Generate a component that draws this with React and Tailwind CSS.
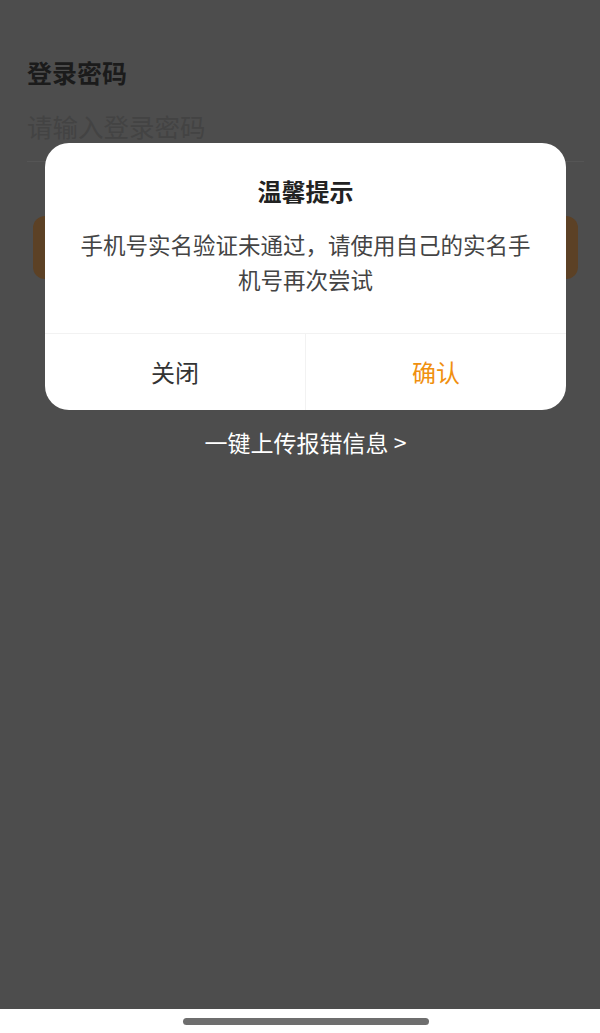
export default function App() {
  return (
    <div
      className="w-[600px] h-[1033px] flex flex-col bg-white"
      style={{ fontFamily: '"Noto Sans CJK SC", "Noto Sans", sans-serif' }}
    >
      {/* Page under the mask */}
      <div className="relative flex-1 bg-[#4d4d4d] overflow-hidden">
        <div className="pl-[27px] pr-[16px] pt-[55px]">
          <h2 className="text-[25px] leading-[34px] font-bold text-[#1b1b1b]">登录密码</h2>
          <div className="mt-[20px] pb-[18px] border-b border-[#555555] text-[25.5px] leading-[34px] text-[#434343]">
            请输入登录密码
          </div>
        </div>
        <div className="ml-[33px] mr-[22px] mt-[54px] h-[63px] rounded-[12px] bg-[#5c4125]" />

        {/* Dialog */}
        <div className="absolute inset-0 flex flex-col items-center pl-[11px] pt-[143px]">
          <div className="w-[521px] rounded-[24px] bg-white overflow-hidden">
            <div className="px-[32px] pt-[31px] pb-[36px] text-center">
              <h3 className="text-[24px] leading-[34px] font-bold text-[#222222]">温馨提示</h3>
              <p className="mt-[19px] text-[22.5px] leading-[35px] text-[#444444]">
                手机号实名验证未通过，请使用自己的实名手机号再次尝试
              </p>
            </div>
            <div className="flex h-[77px] border-t border-[#f2f2f2]">
              <button className="flex-1 flex items-center justify-center text-[24px] text-[#333333] border-r border-[#f2f2f2]">
                关闭
              </button>
              <button className="flex-1 flex items-center justify-center text-[24px] text-[#f0900f]">
                确认
              </button>
            </div>
          </div>
          <div className="mt-[16px] text-[23px] leading-[32px] text-white">一键上传报错信息 &gt;</div>
        </div>
      </div>

      {/* Home indicator */}
      <div className="h-[24px] flex items-center justify-center pl-[11px] bg-white">
        <div className="w-[246px] h-[7px] rounded-full bg-[#6e6e6e]" />
      </div>
    </div>
  );
}
